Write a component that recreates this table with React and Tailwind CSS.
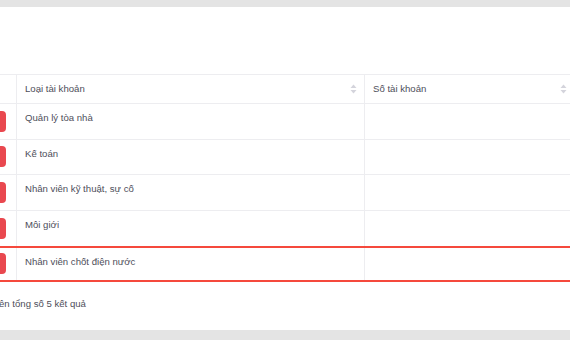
const rows = [
  { type: "Quản lý tòa nhà", count: "" },
  { type: "Kế toán", count: "" },
  { type: "Nhân viên kỹ thuật, sự cố", count: "" },
  { type: "Môi giới", count: "" },
  { type: "Nhân viên chốt điện nước", count: "", active: true },
];

function SortIcon() {
  return (
    <svg width="7" height="10" viewBox="0 0 7 10" className="shrink-0">
      <path d="M3.5 0.5 L6.5 4 L0.5 4 Z" fill="#d4d4dc" />
      <path d="M3.5 9.5 L6.5 6 L0.5 6 Z" fill="#d4d4dc" />
    </svg>
  );
}

function rowClass(row, i) {
  if (row.active) return "grid grid-cols-[17px_348px_1fr] h-[36px] border-y-2 border-[#f5493c]";
  if (i === 3) return "grid grid-cols-[17px_348px_1fr] h-[35px]";
  return "grid grid-cols-[17px_348px_1fr] h-[35.5px] border-b border-[#ededf0]";
}

export default function App() {
  return (
    <div
      className="w-[570px] h-[340px] bg-[#e4e4e4] pt-[7px] pb-[10px] overflow-hidden"
      style={{ fontFamily: '"Liberation Sans", Arial, sans-serif' }}
    >
      <div className="h-full bg-white flex flex-col overflow-hidden">
        <div className="h-[67px] shrink-0" />

        {/* table, scrolled right so the action column is partly hidden */}
        <div className="text-[9.6px] text-[#4e4e5a]">
          <div className="grid grid-cols-[17px_348px_1fr] h-[30px] border-y border-[#ededf0]">
            <div className="border-r border-[#ededf0]" />
            <div className="flex items-center justify-between pl-[8px] pr-[7px] border-r border-[#ededf0]">
              <span>Loại tài khoản</span>
              <SortIcon />
            </div>
            <div className="flex items-center justify-between pl-[8px] pr-[3px]">
              <span>Số tài khoản</span>
              <SortIcon />
            </div>
          </div>

          {rows.map((row, i) => (
            <div key={row.type} className={rowClass(row, i)}>
              <div className="flex items-center border-r border-[#ededf0]">
                <button className="w-[24px] h-[21px] -ml-[18px] rounded-[4px] bg-[#e9484f]" />
              </div>
              <div className="pl-[8px] pt-[7px] border-r border-[#ededf0]">{row.type}</div>
              <div className="pl-[8px] pt-[7px]">{row.count}</div>
            </div>
          ))}
        </div>

        <div className="pt-[15px] text-[9.6px] text-[#4e4e5a] whitespace-nowrap">
          <span className="-ml-[1px]">ên tổng số 5 kết quả</span>
        </div>
      </div>
    </div>
  );
}
